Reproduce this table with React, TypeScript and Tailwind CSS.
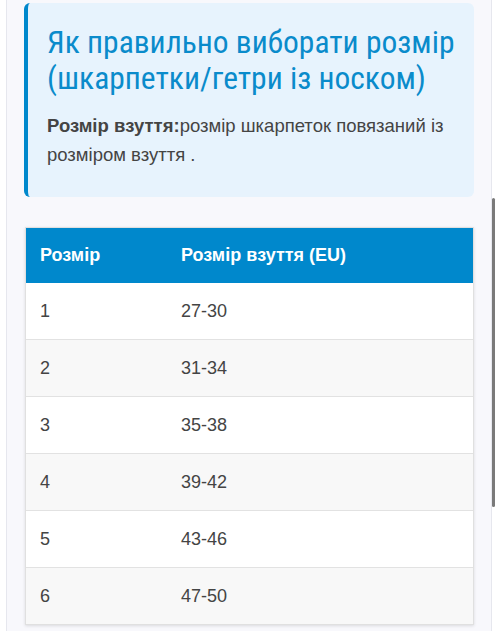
import React from "react";

const rows = [
  ["1", "27-30"],
  ["2", "31-34"],
  ["3", "35-38"],
  ["4", "39-42"],
  ["5", "43-46"],
  ["6", "47-50"],
];

export default function App() {
  return (
    <div className="relative w-[499px] h-[631px] overflow-hidden bg-white" style={{ fontFamily: '"Liberation Sans", Arial, sans-serif' }}>
      <div className="ml-[6px] w-[486px] h-[631px] border-x border-[#e6e7ee] bg-[#f8f8fc] px-[17px] pt-[3px]">
        <div className="rounded-[6px] border-l-[4px] border-[#0088cc] bg-[#e7f3fd] pl-[19px] pr-[12px] pt-[22px] pb-[28px]">
          <h2
            className="text-[31.5px] leading-[36px] text-[#0a8bcb]"
            style={{ fontFamily: 'Roboto, sans-serif', fontStretch: "75%" }}
          >
            Як правильно виборати розмір (шкарпетки/гетри із носком)
          </h2>
          <p className="mt-[15px] text-[18.5px] leading-[28.5px] text-[#444]">
            <span className="font-bold">Розмір взуття:</span>розмір шкарпеток повязаний із розміром взуття .
          </p>
        </div>
        <div className="mt-[30px] ml-[1px] border border-[#e0e0e0] shadow-[0_1px_3px_rgba(0,0,0,0.12)]">
          <div className="flex h-[55px] items-center bg-[#0088cc] text-[18px] font-bold text-white">
            <div className="w-[155px] pl-[14px]">Розмір</div>
            <div>Розмір взуття (EU)</div>
          </div>
          {rows.map(([a, b], i) => (
            <div
              key={a}
              className={
                "flex items-center text-[18px] text-[#444] " +
                (i > 0 ? "h-[57px] border-t border-[#e2e2e2] " : "h-[56px] ") +
                (i % 2 === 1 ? "bg-[#f8f8f8]" : "bg-white")
              }
            >
              <div className="w-[155px] pl-[14px]">{a}</div>
              <div>{b}</div>
            </div>
          ))}
        </div>
      </div>
      <div className="absolute left-[492px] top-[198px] h-[309px] w-[3px] rounded-full bg-[#7a7a7a]" />
    </div>
  );
}
